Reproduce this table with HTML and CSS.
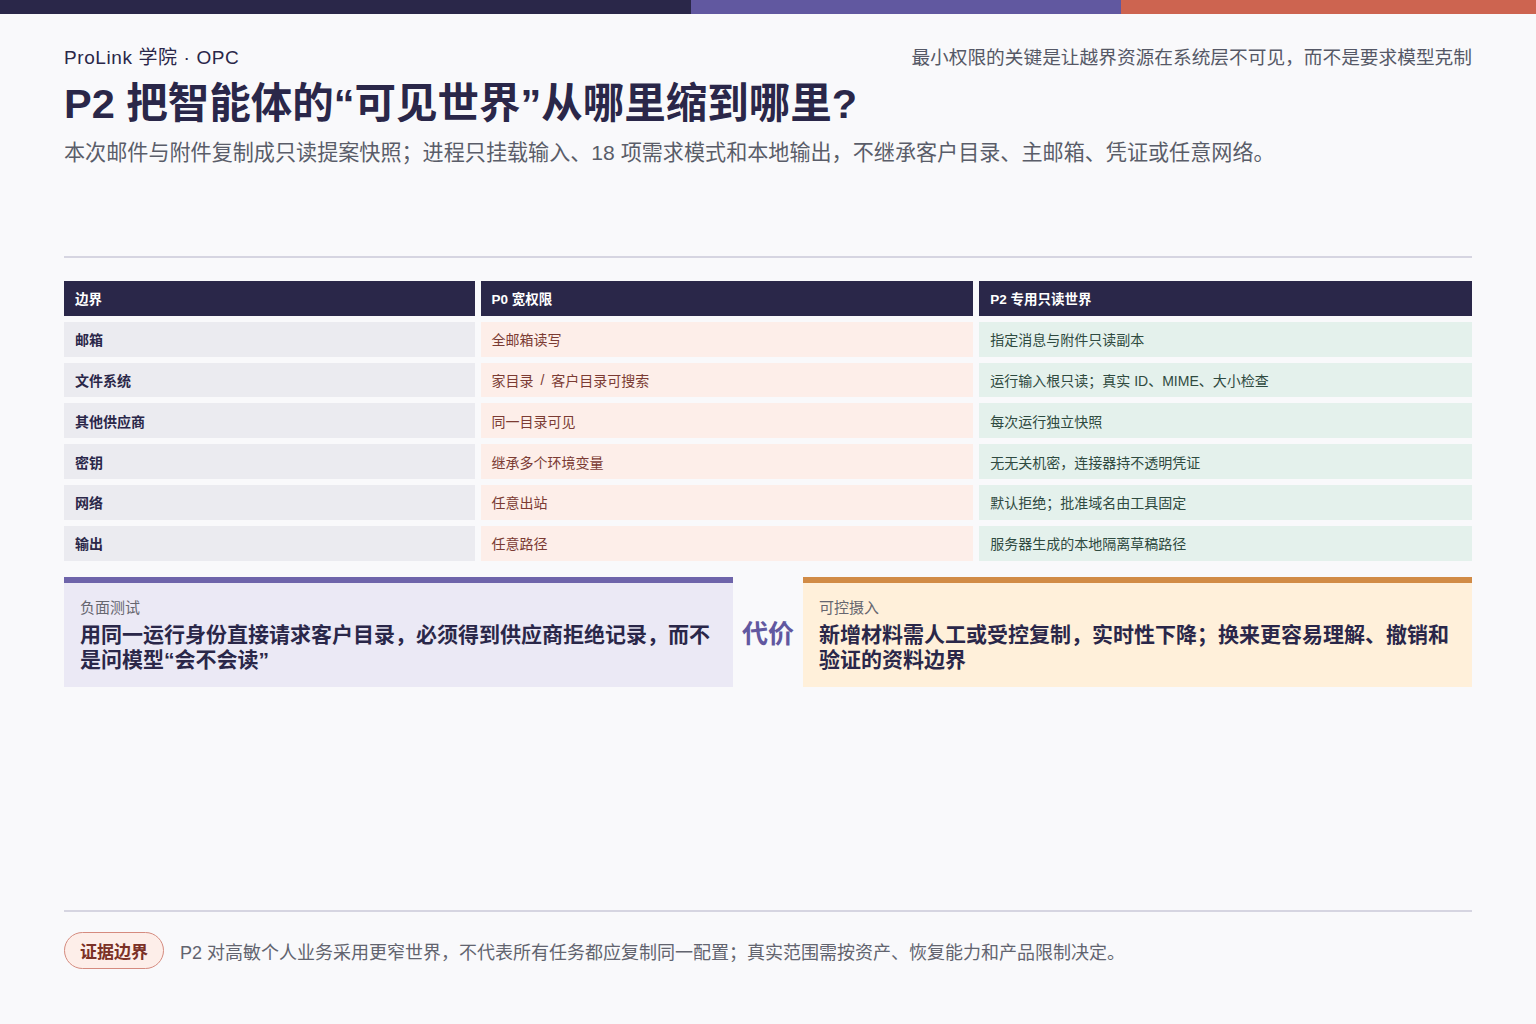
FILE: index.html
```html
<!DOCTYPE html>
<html lang="zh-CN">
<head>
<meta charset="utf-8">
<title>P2 可见世界</title>
<link rel="stylesheet" href="styles.css">
</head>
<body>
<div class="topbar">
  <span class="seg seg-navy"></span>
  <span class="seg seg-purple"></span>
  <span class="seg seg-red"></span>
</div>
<div class="page">
  <main class="main">
    <header class="head">
      <div class="brand">ProLink 学院 · OPC</div>
      <div class="tagline">最小权限的关键是让越界资源在系统层不可见，而不是要求模型克制</div>
    </header>
    <h1 class="title">P2 把智能体的“可见世界”从哪里缩到哪里?</h1>
    <p class="subtitle">本次邮件与附件复制成只读提案快照；进程只挂载输入、18 项需求模式和本地输出，不继承客户目录、主邮箱、凭证或任意网络。</p>
    <hr class="rule">
    <div class="table">
      <div class="th">边界</div>
      <div class="th">P0 宽权限</div>
      <div class="th">P2 专用只读世界</div>

      <div class="td key">邮箱</div>
      <div class="td p0">全邮箱读写</div>
      <div class="td p2">指定消息与附件只读副本</div>

      <div class="td key">文件系统</div>
      <div class="td p0">家目录 <span class="slash">/</span> 客户目录可搜索</div>
      <div class="td p2">运行输入根只读；真实 ID、MIME、大小检查</div>

      <div class="td key">其他供应商</div>
      <div class="td p0">同一目录可见</div>
      <div class="td p2">每次运行独立快照</div>

      <div class="td key">密钥</div>
      <div class="td p0">继承多个环境变量</div>
      <div class="td p2">无无关机密，连接器持不透明凭证</div>

      <div class="td key">网络</div>
      <div class="td p0">任意出站</div>
      <div class="td p2">默认拒绝；批准域名由工具固定</div>

      <div class="td key">输出</div>
      <div class="td p0">任意路径</div>
      <div class="td p2">服务器生成的本地隔离草稿路径</div>
    </div>
    <div class="callouts">
      <div class="callout callout-test">
        <div class="callout-label">负面测试</div>
        <div class="callout-text">用同一运行身份直接请求客户目录，必须得到供应商拒绝记录，而不是问模型“会不会读”</div>
      </div>
      <div class="cost">代价</div>
      <div class="callout callout-ingest">
        <div class="callout-label">可控摄入</div>
        <div class="callout-text">新增材料需人工或受控复制，实时性下降；换来更容易理解、撤销和验证的资料边界</div>
      </div>
    </div>
  </main>
  <footer class="foot">
    <span class="pill">证据边界</span>
    <span class="foot-text">P2 对高敏个人业务采用更窄世界，不代表所有任务都应复制同一配置；真实范围需按资产、恢复能力和产品限制决定。</span>
  </footer>
</div>
</body>
</html>
```

FILE: styles.css
```css
* { box-sizing: border-box; }

html, body {
  margin: 0;
  padding: 0;
}

body {
  background: #f9f9fb;
  color: #2a2749;
  font-family: "Liberation Sans", "Noto Sans CJK SC", sans-serif;
  width: 1536px;
  height: 1024px;
  overflow: hidden;
  display: flex;
  flex-direction: column;
}

.topbar {
  display: flex;
  height: 14px;
  flex: none;
}
.seg { display: block; height: 100%; }
.seg-navy { flex: 691; background: #2a2749; }
.seg-purple { flex: 430; background: #6158a0; }
.seg-red { flex: 415; background: #cd6450; }

.page {
  flex: 1;
  display: flex;
  flex-direction: column;
  padding: 0 64px;
}

.main {
  flex: 1;
}

.head {
  display: flex;
  justify-content: space-between;
  align-items: center;
  margin-top: 28px;
  height: 26px;
}
.brand {
  font-size: 19px;
  color: #2a2749;
  letter-spacing: 0.6px;
}
.tagline {
  font-size: 18.7px;
  color: #555866;
}

.title {
  margin: 11px 0 0;
  font-size: 41.5px;
  line-height: 50px;
  font-weight: 700;
  color: #2a2749;
}

.subtitle {
  margin: 9px 0 0;
  font-size: 21.1px;
  line-height: 30px;
  color: #5a5d69;
}

.rule {
  margin: 88px 0 0;
  border: 0;
  height: 2px;
  background: #d6d5e1;
}

.table {
  margin-top: 23px;
  display: grid;
  grid-template-columns: 1fr 1.2fr 1.2fr;
  grid-auto-rows: 34.8px;
  gap: 6px;
}

.th, .td {
  display: flex;
  align-items: center;
  padding: 0 11px;
  font-size: 14px;
  white-space: pre;
}
.th {
  background: #2a2749;
  color: #ffffff;
  font-weight: 700;
  font-size: 13.5px;
}
.td.key {
  background: #ebebf0;
  color: #2a2749;
  font-weight: 700;
}
.td.p0 {
  background: #fdeee9;
  color: #7b3b33;
}
.td.p2 {
  background: #e4f1ec;
  color: #2f4a40;
}
.slash {
  padding: 0 3px;
}

.callouts {
  margin-top: 16.4px;
  display: grid;
  grid-template-columns: 1fr auto 1fr;
  gap: 8px;
  align-items: stretch;
}

.callout {
  border-top: 6px solid;
  padding: 15px 16px 14px;
  min-height: 110px;
}
.callout-test {
  background: #ebe9f5;
  border-color: #6e64aa;
}
.callout-ingest {
  background: #fff0da;
  border-color: #d18b46;
}
.callout-label {
  font-size: 15px;
  line-height: 20px;
  color: #66666f;
}
.callout-text {
  margin-top: 4.5px;
  font-size: 21px;
  line-height: 25px;
  font-weight: 700;
  color: #2a2749;
}

.cost {
  align-self: center;
  font-size: 26px;
  font-weight: 700;
  color: #6158a0;
  padding: 0 1px;
}

.foot {
  flex: none;
  border-top: 2px solid #d6d5e1;
  padding: 20px 0 55px;
  display: flex;
  align-items: center;
  gap: 16px;
}
.pill {
  display: inline-flex;
  align-items: center;
  justify-content: center;
  width: 100px;
  height: 37px;
  border: 1.5px solid #d58b7f;
  border-radius: 20px;
  background: #fdeee9;
  color: #7b3126;
  font-size: 17px;
  font-weight: 700;
}
.foot-text {
  font-size: 18px;
  color: #62646f;
}
```
